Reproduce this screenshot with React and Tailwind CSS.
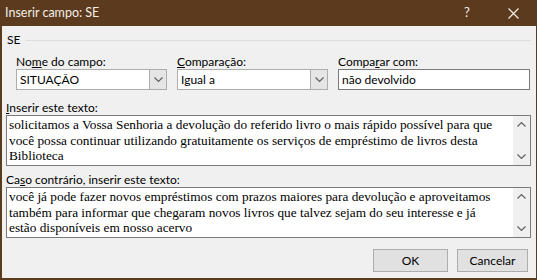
import React from "react";

const ui = { fontFamily: 'Lato, "Noto Sans", sans-serif' };
const serif = { fontFamily: '"Liberation Serif", "DejaVu Serif", serif' };

const Chevron = ({ up }) => (
    <svg width="9" height="6" viewBox="0 0 9 6" className={up ? "rotate-180" : ""}>
        <path d="M0.5 0.5 L4.5 4.5 L8.5 0.5" fill="none" stroke="#606060" strokeWidth="1.2" />
    </svg>
);

const Combo = ({ value }) => (
    <div className="flex h-[21px] border border-[#adadad] bg-white">
        <div className="flex-1 pl-[3px] text-[12px] leading-[19px]">{value}</div>
        <div className="flex w-[17px] items-center justify-center border-l border-[#adadad] bg-[#e5e5e5]">
            <Chevron />
        </div>
    </div>
);

const TextBox = ({ lines }) => (
    <div className="flex h-[51px] border border-[#7a7a7a] bg-white">
        <div className="flex-1 pl-[2px] pt-[1px] text-[13.3px] leading-[15.5px] text-black" style={serif}>
            {lines.map((l, i) => (
                <div key={i} className="whitespace-nowrap">{l}</div>
            ))}
        </div>
        <div className="flex w-[17px] flex-col items-center justify-between bg-[#f0f0f0] py-[5px]">
            <Chevron up />
            <Chevron />
        </div>
    </div>
);

const Label = ({ children }) => <div className="h-[14px] text-[12px] leading-[14px] text-black">{children}</div>;

export default function App() {
    return (
        <div className="flex h-[280px] w-[537px] flex-col overflow-hidden bg-[#5b3a1d]" style={ui}>
            {/* Title bar */}
            <div className="flex h-[26px] shrink-0 items-center pl-[5px] text-[12.5px] text-[#f4eee8]">
                <span className="flex-1">Inserir campo: SE</span>
                <span className="w-[20px] text-center text-[13px]">?</span>
                <span className="ml-[26px] mr-[14px] flex w-[20px] justify-center">
                    <svg width="11" height="11" viewBox="0 0 11 11">
                        <path d="M0.5 0.5 L10.5 10.5 M10.5 0.5 L0.5 10.5" stroke="#f4eee8" strokeWidth="1.2" />
                    </svg>
                </span>
            </div>

            {/* Body */}
            <div className="mb-[2px] ml-[2px] mr-[1px] flex flex-1 flex-col bg-[#f0f0f0]">
                {/* Group header */}
                <div className="mt-[7px] flex items-center pl-[5px] pr-[5px]">
                    <Label>SE</Label>
                    <div className="ml-[6px] h-px flex-1 bg-[#dcdcdc]" />
                </div>

                {/* Fields */}
                <div className="mt-[8px] grid grid-cols-[151px_151px_192px] gap-x-[10px] pl-[14px]">
                    <Label>No<span className="underline">m</span>e do campo:</Label>
                    <Label><span className="underline">C</span>omparação:</Label>
                    <Label>Compa<span className="underline">r</span>ar com:</Label>
                    <Combo value="SITUAÇÃO" />
                    <Combo value="Igual a" />
                    <div className="flex h-[21px] border border-[#7a7a7a] bg-white pl-[3px] text-[12px] leading-[19px]">
                        não devolvido
                    </div>
                </div>

                {/* Text 1 */}
                <div className="mt-[11px] pl-[4px] pr-[5px]">
                    <Label><span className="underline">I</span>nserir este texto:</Label>
                    <TextBox
                        lines={[
                            "solicitamos a Vossa Senhoria a devolução do referido livro o mais rápido possível para que",
                            "você possa continuar utilizando gratuitamente os serviços de empréstimo de livros desta",
                            "Biblioteca",
                        ]}
                    />
                </div>

                {/* Text 2 */}
                <div className="mt-[7px] pl-[4px] pr-[5px]">
                    <Label>Ca<span className="underline">s</span>o contrário, inserir este texto:</Label>
                    <TextBox
                        lines={[
                            "você já pode fazer novos empréstimos com prazos maiores para devolução e aproveitamos",
                            "também para informar que chegaram novos livros que talvez sejam do seu interesse e já",
                            "estão disponíveis em nosso acervo",
                        ]}
                    />
                </div>

                {/* Buttons */}
                <div className="mt-[11px] flex justify-end gap-[9px] pr-[8px]">
                    <button className="h-[23px] w-[75px] border border-[#adadad] bg-[#e1e1e1] text-[12px]">OK</button>
                    <button className="h-[23px] w-[71px] border border-[#adadad] bg-[#e1e1e1] text-[12px]">Cancelar</button>
                </div>
            </div>
        </div>
    );
}
